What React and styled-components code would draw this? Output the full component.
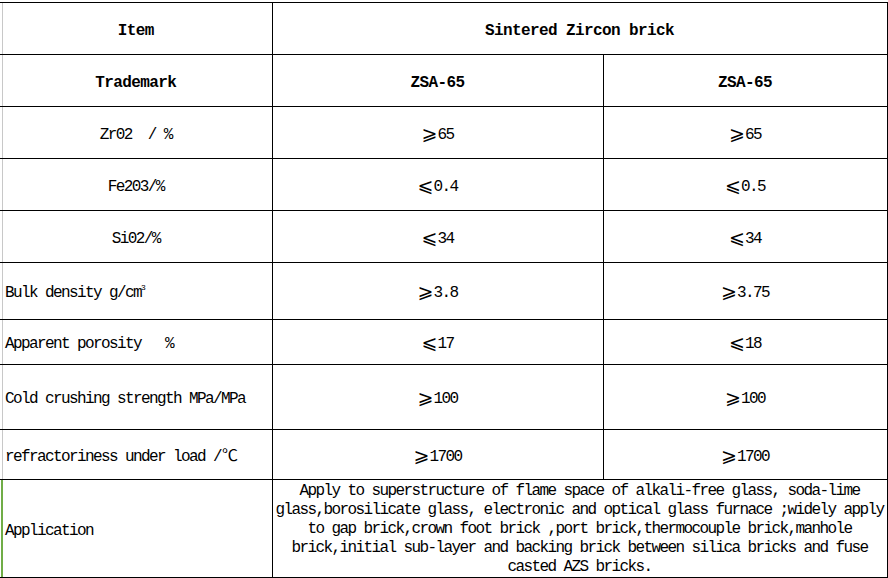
import React from "react";
import styled, { createGlobalStyle } from "styled-components";

const Global = createGlobalStyle`
  html, body { margin: 0; padding: 0; background: #fff; }
  body { font-family: "Liberation Mono", "Noto Sans CJK SC", monospace; color: #000; }
`;

const Page = styled.div`
  padding-top: 2px;
`;

const Table = styled.table`
  border-collapse: collapse;
  table-layout: fixed;
  width: 887px;
  font-family: "Liberation Mono", "DejaVu Sans", "Noto Sans CJK SC", monospace;
  font-size: 16px;
  letter-spacing: -1.6px;
`;

const Row = styled.tr`
  height: ${(p) => p.$h}px;
`;

const Cell = styled.td`
  border: 1px solid #000;
  padding: ${(p) => (p.$flush ? "0 2px" : "4px 2px 0")};
  vertical-align: middle;
  text-align: ${(p) => (p.$left ? "left" : "center")};
  white-space: pre;
  font-weight: ${(p) => (p.$bold ? "bold" : "normal")};
  letter-spacing: ${(p) => (p.$bold ? "-0.6px" : "-1.6px")};
`;

const LabelCell = styled(Cell)`
  border-left: none;
  padding-left: ${(p) => (p.$left ? "5px" : "2px")};
  background: ${(p) =>
    p.$green
      ? "linear-gradient(to right, transparent 1px, #70ad47 1px, #70ad47 3px, transparent 3px)"
      : "linear-gradient(to right, transparent 2px, #c8c8c8 2px, #c8c8c8 3px, transparent 3px)"};
`;

const Sym = styled.span`
  font-family: "DejaVu Sans", "Noto Sans CJK SC", sans-serif;
  font-size: 19px;
  line-height: 0;
  letter-spacing: 0;
  vertical-align: -1px;
`;

const Sup = styled.sup`
  font-size: 8px;
  vertical-align: 7px;
  line-height: 0;
  letter-spacing: 0;
`;

const Deg = styled.span`
  font-family: "Noto Sans CJK SC", sans-serif;
  letter-spacing: 0;
  font-size: 16px;
  line-height: 0;
  margin-left: 1px;
`;

const AppText = styled.div`
  line-height: 19px;
  text-align: center;
  white-space: nowrap;
  padding-top: 2px;
`;

const rows = [
  { label: "Zr02  / %", a: ["ge", "65"], b: ["ge", "65"], h: 52 },
  { label: "Fe203/%", a: ["le", "0.4"], b: ["le", "0.5"], h: 52 },
  { label: "Si02/%", a: ["le", "34"], b: ["le", "34"], h: 52 },
  { label: "bulk", a: ["ge", "3.8"], b: ["ge", "3.75"], h: 57, left: true },
  { label: "Apparent porosity   %", a: ["le", "17"], b: ["le", "18"], h: 45, left: true },
  { label: "Cold crushing strength MPa/MPa", a: ["ge", "100"], b: ["ge", "100"], h: 65, left: true },
  { label: "refr", a: ["ge", "1700"], b: ["ge", "1700"], h: 50, left: true },
];

const Val = ({ v }) => (
  <>
    <Sym>{v[0] === "ge" ? "⩾" : "⩽"}</Sym>
    {v[1]}
  </>
);

const Label = ({ label }) => {
  if (label === "bulk")
    return (
      <>
        Bulk density g/cm<Sup>3</Sup>
      </>
    );
  if (label === "refr")
    return (
      <>
        refractoriness under load /<Deg>℃</Deg>
      </>
    );
  return label;
};

export default function App() {
  return (
    <Page>
      <Global />
      <Table>
        <colgroup>
          <col style={{ width: 272 }} />
          <col style={{ width: 331 }} />
          <col style={{ width: 284 }} />
        </colgroup>
        <tbody>
          <Row $h={52}>
            <LabelCell $bold>Item</LabelCell>
            <Cell $bold colSpan={2}>Sintered Zircon brick</Cell>
          </Row>
          <Row $h={52}>
            <LabelCell $bold>Trademark</LabelCell>
            <Cell $bold>ZSA-65</Cell>
            <Cell $bold>ZSA-65</Cell>
          </Row>
          {rows.map((r, i) => (
            <Row key={i} $h={r.h}>
              <LabelCell $left={r.left}>
                <Label label={r.label} />
              </LabelCell>
              <Cell>
                <Val v={r.a} />
              </Cell>
              <Cell>
                <Val v={r.b} />
              </Cell>
            </Row>
          ))}
          <Row $h={97}>
            <LabelCell $left $green>Application</LabelCell>
            <Cell colSpan={2} $flush>
              <AppText>
                Apply to superstructure of flame space of alkali-free glass, soda-lime
                <br />
                glass,borosilicate glass, electronic and optical glass furnace ;widely apply
                <br />
                to gap brick,crown foot brick ,port brick,thermocouple brick,manhole
                <br />
                brick,initial sub-layer and backing brick between silica bricks and fuse
                <br />
                casted AZS bricks.
              </AppText>
            </Cell>
          </Row>
        </tbody>
      </Table>
    </Page>
  );
}
